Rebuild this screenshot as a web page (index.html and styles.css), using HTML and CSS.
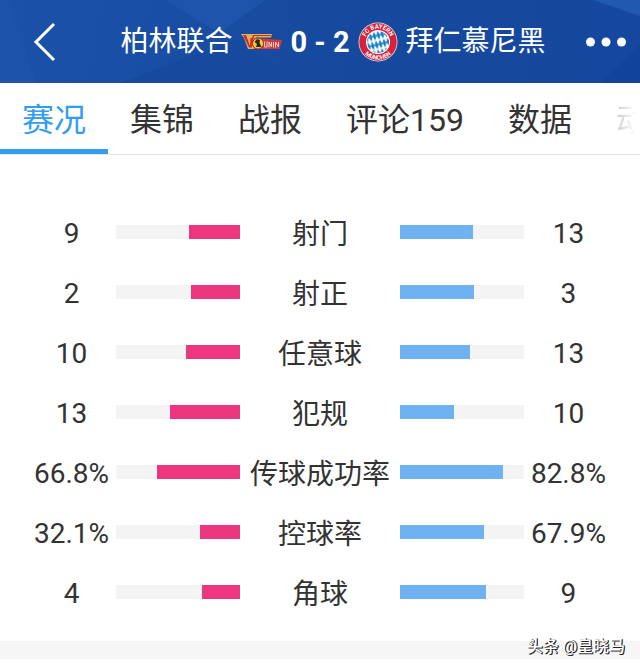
FILE: index.html
```html
<!DOCTYPE html>
<html lang="zh-CN">
<head>
<meta charset="utf-8">
<meta name="viewport" content="width=device-width, initial-scale=1">
<title>柏林联合 0 - 2 拜仁慕尼黑</title>
<link rel="stylesheet" href="styles.css">
</head>
<body>
<header class="topbar">
  <svg class="topbar-art" viewBox="0 0 640 83" preserveAspectRatio="none" aria-hidden="true">
    <path d="M0 0H8L36 83H0Z" fill="#1d54aa"/>
    <path d="M165 0H265L220 33L205 25Z" fill="#1e55aa"/>
    <path d="M120 83L235 40L300 83Z" fill="#164a9f"/>
    <path d="M593 0H640V16Z" fill="#2159af"/>
    <path d="M600 83L640 45V83Z" fill="#12439a"/>
  </svg>
  <button class="icon-button back" type="button" aria-label="返回">
    <svg width="24" height="40" viewBox="0 0 24 40" fill="none" stroke="#fff" stroke-width="3"><path d="M22 2L4 20L22 38"/></svg>
  </button>
  <h1 class="match">
    <span class="team">柏林联合</span>
    <svg class="logo-union" width="42" height="18" viewBox="0 0 42 18" aria-hidden="true">
      <path d="M1 1H32L31 4.500H16L15 16H8L4 5Z" fill="#d9b25c"/>
      <path d="M3 2H6L10 13L10.500 5H12L13 2H31L30.500 3H14L12 14.500H9Z" fill="#cf2a30"/>
      <path d="M14 5L42 7L39.500 16H14Z" fill="#d33a40"/>
      <path d="M24.500 8.500V14H27V8.500M29 14.500V9L31.500 14V9M33.500 9V14.500M35.500 14.500V9L38.500 14V9" fill="none" stroke="#f5cfc4"/>
      <circle cx="18" cy="10.500" r="5.500" fill="#f0cf24" stroke="#b5242c"/>
      <path d="M17 6L20 7L19.500 10L21.500 14H16L17 11L14.500 9Z" fill="#2c2415"/>
    </svg>
    <span class="score">0 - 2</span>
    <svg class="logo-bayern" width="40" height="40" viewBox="0 0 40 40" aria-hidden="true">
      <defs>
        <clipPath id="core"><circle cx="20" cy="20" r="11"/></clipPath>
        <pattern id="lozenge" width="4" height="9" patternUnits="userSpaceOnUse" patternTransform="rotate(-14 20 20)">
          <rect width="4" height="9" fill="#fff"/><path d="M2 0L4 4.500L2 9L0 4.500Z" fill="#1780c4"/>
        </pattern>
        <path id="arc-top" d="M6.500 20A13.500 13.500 0 0 1 33.500 20"/>
        <path id="arc-bottom" d="M2.200 20A17.800 17.800 0 0 0 37.800 20"/>
      </defs>
      <circle cx="20" cy="20" r="19.500" fill="#d9e0ef"/>
      <circle cx="20" cy="20" r="18.700" fill="#d8213b"/>
      <circle cx="20" cy="20" r="12" fill="#fff"/>
      <rect x="8" y="8" width="24" height="24" fill="url(#lozenge)" clip-path="url(#core)"/>
      <text class="crest-text"><textPath href="#arc-top" startOffset="50%">FC BAYERN</textPath></text>
      <text class="crest-text"><textPath href="#arc-bottom" startOffset="50%">MÜNCHEN</textPath></text>
    </svg>
    <span class="team">拜仁慕尼黑</span>
  </h1>
  <button class="icon-button" type="button" aria-label="更多">
    <svg width="40" height="10" viewBox="0 0 40 10" fill="#fff"><circle cx="4.500" cy="5" r="4.500"/><circle cx="20" cy="5" r="4.500"/><circle cx="35.500" cy="5" r="4.500"/></svg>
  </button>
</header>
<nav class="tabs">
  <a class="tab active" href="#stats" aria-current="page">赛况</a>
  <a class="tab" href="#highlights">集锦</a>
  <a class="tab" href="#report">战报</a>
  <a class="tab" href="#comments">评论159</a>
  <a class="tab" href="#data">数据</a>
  <a class="tab" href="#feed">动</a>
</nav>
<main class="stats" id="stats">
  <table class="stats-table">
    <colgroup><col class="col-value"><col class="col-bar"><col class="col-label"><col class="col-bar"><col class="col-value"></colgroup>
    <tbody>
      <tr><td class="value">9</td><td><div class="bar home"><div class="fill" style="width:40.9%"></div></div></td><th scope="row">射门</th><td><div class="bar away"><div class="fill" style="width:59.1%"></div></div></td><td class="value">13</td></tr>
      <tr><td class="value">2</td><td><div class="bar home"><div class="fill" style="width:40%"></div></div></td><th scope="row">射正</th><td><div class="bar away"><div class="fill" style="width:60%"></div></div></td><td class="value">3</td></tr>
      <tr><td class="value">10</td><td><div class="bar home"><div class="fill" style="width:43.5%"></div></div></td><th scope="row">任意球</th><td><div class="bar away"><div class="fill" style="width:56.5%"></div></div></td><td class="value">13</td></tr>
      <tr><td class="value">13</td><td><div class="bar home"><div class="fill" style="width:56.5%"></div></div></td><th scope="row">犯规</th><td><div class="bar away"><div class="fill" style="width:43.5%"></div></div></td><td class="value">10</td></tr>
      <tr><td class="value">66.8%</td><td><div class="bar home"><div class="fill" style="width:66.8%"></div></div></td><th scope="row">传球成功率</th><td><div class="bar away"><div class="fill" style="width:82.8%"></div></div></td><td class="value">82.8%</td></tr>
      <tr><td class="value">32.1%</td><td><div class="bar home"><div class="fill" style="width:32.1%"></div></div></td><th scope="row">控球率</th><td><div class="bar away"><div class="fill" style="width:67.9%"></div></div></td><td class="value">67.9%</td></tr>
      <tr><td class="value">4</td><td><div class="bar home"><div class="fill" style="width:30.8%"></div></div></td><th scope="row">角球</th><td><div class="bar away"><div class="fill" style="width:69.2%"></div></div></td><td class="value">9</td></tr>
    </tbody>
  </table>
</main>
<footer class="divider">
  <span class="credit">头条 @皇晓马</span>
</footer>
</body>
</html>
```
FILE: styles.css
```css
* { box-sizing: border-box; }

body {
  margin: 0;
  background: #fff;
  color: #333;
  font-family: Roboto, "Noto Sans CJK SC", sans-serif;
}

.topbar {
  position: relative;
  display: flex;
  align-items: center;
  justify-content: space-between;
  height: 83px;
  padding: 0 14px 0 32px;
  background: linear-gradient(100deg, #1b52a8, #164a9f 50%, #14479d);
  color: #fff;
}

.topbar-art {
  position: absolute;
  inset: 0;
  width: 100%;
  height: 100%;
}

.icon-button {
  position: relative;
  display: flex;
  padding: 0;
  border: 0;
  background: none;
}

.back { padding-right: 24px; }

.match {
  position: relative;
  display: flex;
  align-items: center;
  gap: 8px;
  margin: 0;
  font-size: 28px;
  font-weight: 400;
  line-height: 40px;
  white-space: nowrap;
}

.score {
  font-size: 29px;
  font-weight: 700;
}

.crest-text {
  fill: #fff;
  font-size: 6px;
  font-weight: 700;
  text-anchor: middle;
}

.tabs {
  display: flex;
  height: 72px;
  overflow: hidden;
  border-bottom: 1px solid #e6e6e6;
}

.tab {
  flex: none;
  height: 71px;
  padding: 0 22px;
  border-bottom: 5px solid transparent;
  color: #333;
  font-size: 32px;
  line-height: 74px;
  text-decoration: none;
}

.tab.active {
  border-color: #339bf2;
  color: #339bf2;
}

.tab:last-child {
  background: linear-gradient(90deg, #ccc 22px, #fff 42px);
  background-clip: text;
  color: transparent;
}

.stats { padding: 47px 27px 19px; }

.stats-table {
  width: 100%;
  border-collapse: collapse;
  table-layout: fixed;
}

.col-value { width: 15.2%; }
.col-bar { width: 21.2%; }
.col-label { width: 27.2%; }

.stats-table td,
.stats-table th {
  height: 60px;
  padding: 0;
  font-size: 28px;
  font-weight: 400;
  line-height: 40px;
  text-align: center;
  white-space: nowrap;
}

.stats-table .value { padding-top: 4px; }
.stats-table th { padding-top: 6px; }

.bar {
  display: flex;
  height: 14px;
  background: #f4f4f4;
}

.home { justify-content: flex-end; }
.home .fill { background: #ec367e; }
.away .fill { background: #6eb2f2; }

.divider {
  position: relative;
  height: 18px;
  background: #f6f6f6;
}

.credit {
  position: absolute;
  right: 15px;
  top: -6px;
  color: #fff;
  font-size: 16px;
  font-weight: 500;
  line-height: 24px;
  text-shadow: 1px 1px 0 #222, 1px 0 0 #222;
}
```
